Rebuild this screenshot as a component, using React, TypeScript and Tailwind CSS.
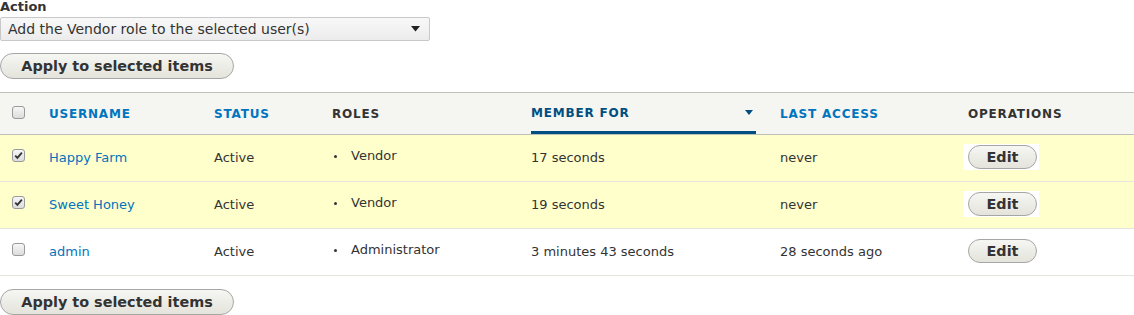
import { JSX } from 'react'

type Row = { name: string; status: string; role: string; member: string; access: string; checked: boolean }

const rows: Row[] = [
  { name: 'Happy Farm', status: 'Active', role: 'Vendor', member: '17 seconds', access: 'never', checked: true },
  { name: 'Sweet Honey', status: 'Active', role: 'Vendor', member: '19 seconds', access: 'never', checked: true },
  { name: 'admin', status: 'Active', role: 'Administrator', member: '3 minutes 43 seconds', access: '28 seconds ago', checked: false },
]

const Checkbox = ({ checked }: { checked: boolean }): JSX.Element => (
  <span className="inline-flex h-[13px] w-[13px] items-center justify-center rounded-[3px] border border-[#9a9a9a] bg-gradient-to-b from-[#f7f7f7] to-[#dcdcdc]">
    {checked && (
      <svg width="9" height="9" viewBox="0 0 9 9">
        <path d="M1.2 4.6 L3.4 6.9 L7.9 1.6" fill="none" stroke="#333" strokeWidth="1.8" />
      </svg>
    )}
  </span>
)

const PillButton = ({ label, className }: { label: string; className: string }): JSX.Element => (
  <button
    type="button"
    className={`rounded-full border border-[#a6a6a6] bg-gradient-to-b from-[#f6f6f3] to-[#e4e4dc] text-[14.4px] font-bold leading-none text-[#333] ${className}`}
  >
    {label}
  </button>
)

export default function App(): JSX.Element {
  return (
    <div className="h-[315px] w-[1134px] overflow-hidden bg-white font-['DejaVu_Sans',sans-serif] text-[13px] text-[#333]">
      <label className="block text-[13px] font-bold leading-[13px] text-[#333]">Action</label>
      <div className="mt-[4px] flex h-[24px] w-[430px] items-center justify-between rounded-[2px] border border-[#c8c8c8] bg-gradient-to-b from-[#f8f8f8] to-[#ececec] pl-[7px] pr-[9px] text-[14px]">
        <span>Add the Vendor role to the selected user(s)</span>
        <svg width="9" height="6" viewBox="0 0 9 6">
          <path d="M0 0 H9 L4.5 5.5 Z" fill="#222" />
        </svg>
      </div>
      <PillButton label="Apply to selected items" className="mt-[12px] h-[26px] w-[234px]" />

      <table className="mt-[13px] w-full table-fixed border-collapse">
        <colgroup>
          <col className="w-[37px]" />
          <col className="w-[165px]" />
          <col className="w-[118px]" />
          <col className="w-[199px]" />
          <col className="w-[249px]" />
          <col className="w-[188px]" />
          <col />
        </colgroup>
        <thead>
          <tr className="h-[41px] border-y border-[#bfbfba] bg-[#f5f5f2] text-left text-[12px] font-bold uppercase tracking-[0.8px]">
            <th className="pl-[12px] align-middle">
              <span className="relative top-[-1px] flex">
                <Checkbox checked={false} />
              </span>
            </th>
            <th className="pl-[12px] font-bold text-[#0074bd]">Username</th>
            <th className="pl-[12px] font-bold text-[#0074bd]">Status</th>
            <th className="pl-[12px] font-bold text-[#333]">Roles</th>
            <th className="px-[12px] pt-[3px] font-bold text-[#004f80]">
              <div className="flex h-[38px] items-center justify-between border-b-[3px] border-[#004f80] pb-[2px] pr-[3px]">
                <span>Member for</span>
                <svg width="8" height="5" viewBox="0 0 8 5">
                  <path d="M0 0 H8 L4 5 Z" fill="#004f80" />
                </svg>
              </div>
            </th>
            <th className="pl-[12px] font-bold text-[#0074bd]">Last access</th>
            <th className="pl-[12px] font-bold text-[#333]">Operations</th>
          </tr>
        </thead>
        <tbody>
          {rows.map((row) => (
            <tr key={row.name} className={`h-[47px] border-b border-[#e6e4df] ${row.checked ? 'bg-[#ffffcc]' : 'bg-white'}`}>
              <td className="pl-[12px] align-middle">
                <span className="relative top-[-3px] flex">
                  <Checkbox checked={row.checked} />
                </span>
              </td>
              <td className="pl-[12px] text-[#0074bd]">{row.name}</td>
              <td className="pl-[12px]">{row.status}</td>
              <td className="pl-[12px]">
                <div className="relative top-[-2px] flex items-center">
                  <span className="ml-[2px] mr-[14px] h-[3px] w-[3px] rounded-full bg-[#333]" />
                  <span>{row.role}</span>
                </div>
              </td>
              <td className="pl-[12px]">{row.member}</td>
              <td className="pl-[12px]">{row.access}</td>
              <td className="pl-[7px]">
                <span className="relative top-[-1px] inline-flex bg-white py-[1px] pl-[5px] pr-[2px]">
                  <PillButton label="Edit" className="h-[24px] w-[69px]" />
                </span>
              </td>
            </tr>
          ))}
        </tbody>
      </table>

      <PillButton label="Apply to selected items" className="mt-[13px] h-[26px] w-[234px]" />
    </div>
  )
}
